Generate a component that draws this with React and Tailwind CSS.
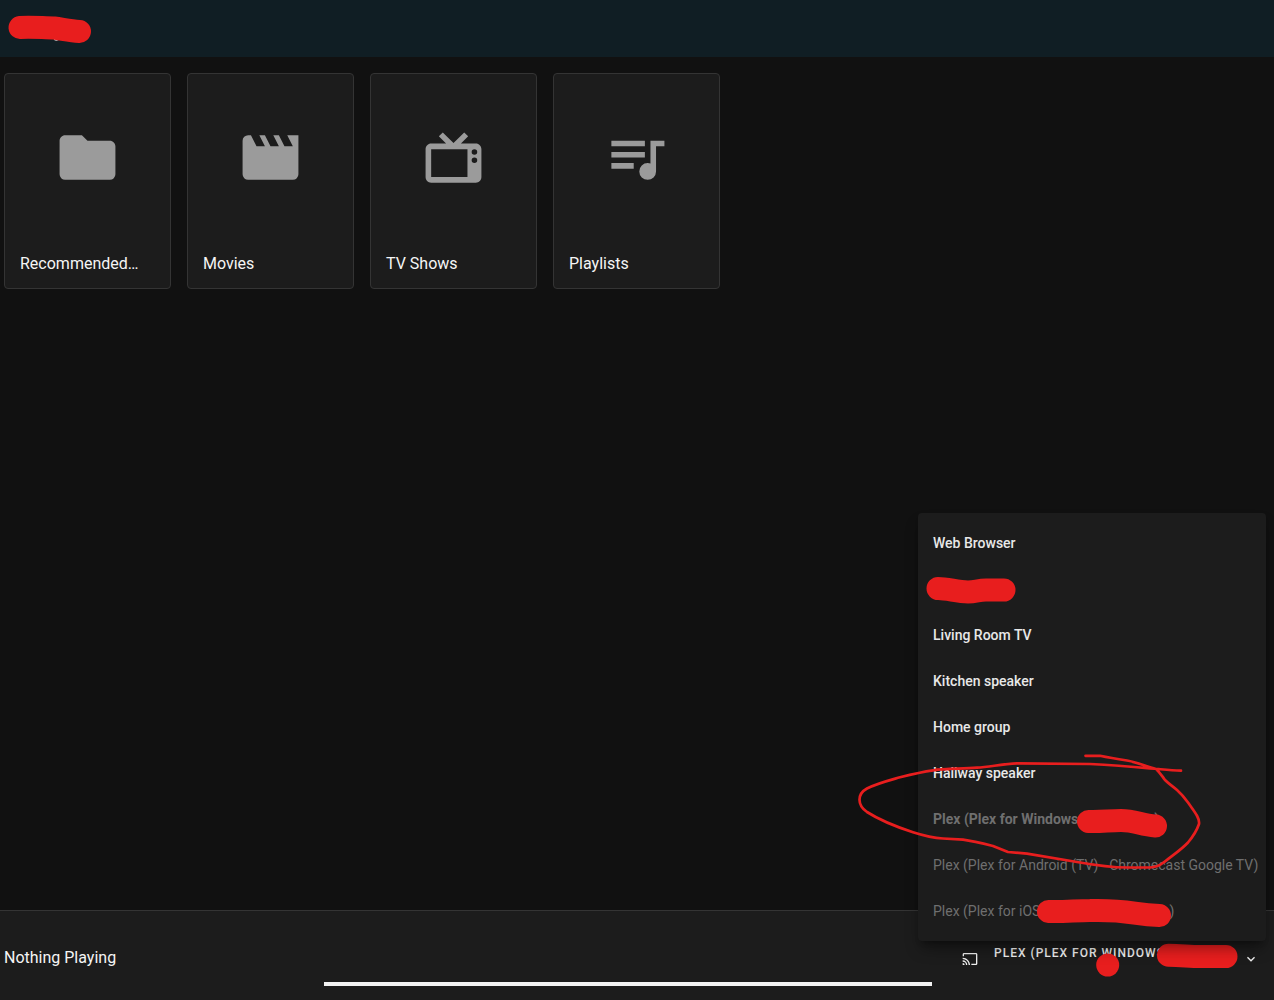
import React from "react";

const folders = [
  {
    title: "Recommended…",
    path: "M10,4H4C2.89,4 2,4.89 2,6V18A2,2 0 0,0 4,20H20A2,2 0 0,0 22,18V8C22,6.89 21.1,6 20,6H12L10,4Z",
  },
  {
    title: "Movies",
    path: "M18,4L20,8H17L15,4H13L15,8H12L10,4H8L10,8H7L5,4H4A2,2 0 0,0 2,6V18A2,2 0 0,0 4,20H20A2,2 0 0,0 22,18V4H18Z",
  },
  {
    title: "TV Shows",
    path: "M8.16,3L6.75,4.41L9.34,7H4C2.89,7 2,7.89 2,9V19C2,20.11 2.89,21 4,21H20C21.11,21 22,20.11 22,19V9C22,7.89 21.11,7 20,7H14.66L17.25,4.41L15.84,3L12,6.84L8.16,3M4,9H17V19H4V9M19.5,9A1,1 0 0,1 20.5,10A1,1 0 0,1 19.5,11A1,1 0 0,1 18.5,10A1,1 0 0,1 19.5,9M19.5,12A1,1 0 0,1 20.5,13A1,1 0 0,1 19.5,14A1,1 0 0,1 18.5,13A1,1 0 0,1 19.5,12Z",
  },
  {
    title: "Playlists",
    path: "M15,6H3V8H15V6M15,10H3V12H15V10M3,16H11V14H3V16M17,6V14.18C16.69,14.07 16.35,14 16,14A3,3 0 0,0 13,17A3,3 0 0,0 16,20A3,3 0 0,0 19,17V8H22V6H17Z",
  },
];

const players = [
  { name: "Web Browser" },
  { name: "" },
  { name: "Living Room TV" },
  { name: "Kitchen speaker" },
  { name: "Home group" },
  { name: "Hallway speaker" },
  { name: "Plex (Plex for Windows", selected: true, disabled: true, gap: "w-[76px]" },
  { name: "Plex (Plex for Android (TV) - Chromecast Google TV)", disabled: true },
  { name: "Plex (Plex for iOS", disabled: true, gap: "w-[129px]" },
];

const getPlayerStyle = (player) => {
  if (player.selected) return "font-bold text-[#6f6f6f]";
  if (player.disabled) return "font-normal text-[#6f6f6f]";
  return "font-medium text-[#e8e8e8]";
};

const Icon = ({ path, className }) => (
  <svg viewBox="0 0 24 24" fill="currentColor" className={className} aria-hidden="true">
    <path d={path} />
  </svg>
);

const Marker = ({ d, width = 23 }) => (
  <path d={d} fill="none" stroke="#e81e1e" strokeWidth={width} strokeLinecap="round" strokeLinejoin="round" />
);

const Header = () => (
  <header className="h-[57px] bg-[#101e24]">
    <svg viewBox="0 0 100 57" className="h-full" aria-hidden="true">
      <path d="M54 39h6q-3 3-6 1Z" fill="#e1e1e1" />
      <Marker d="M20 27.5C31 26.5 44 28 54 28C62 29 70 31 79.5 31.5" />
    </svg>
  </header>
);

const FolderCard = ({ title, path }) => (
  <button
    type="button"
    className="flex w-[167px] flex-col rounded border border-[#343434] bg-[#1c1c1c] text-left"
  >
    <span className="flex h-[166px] w-full items-center justify-center text-[#9b9b9b]">
      <Icon path={path} className="size-[67px]" />
    </span>
    <span className="px-[15px] text-base leading-12 text-[#f5f5f5]">{title}</span>
  </button>
);

const PlayerMenu = () => (
  <div className="absolute right-2 bottom-[59px] w-[348px] rounded bg-[#1c1c1c] py-[7px] shadow-lg shadow-black/40">
    <ul>
      {players.map((player, i) => (
        <li key={i}>
          <button
            type="button"
            disabled={player.disabled}
            aria-label={player.name || "Player"}
            className={`flex h-[46px] w-full items-center px-[15px] text-sm whitespace-nowrap ${getPlayerStyle(player)}`}
          >
            {player.name}
            {player.gap && (
              <>
                <span className={player.gap} />)
              </>
            )}
          </button>
        </li>
      ))}
    </ul>

    {/* Marker strokes */}
    <svg
      viewBox="918 513 348 428"
      className="pointer-events-none absolute inset-0 size-full overflow-visible"
      aria-hidden="true"
    >
      <Marker d="M938 588.5C948 588.5 957 592 968 592C976 592 978 590 986 590H1004" />
      <Marker d="M1088.5 821.5C1101 822 1109 820.5 1121 820.5C1135 820.5 1141 825 1155.5 826" />
      <Marker d="M1048.5 911.5C1064 912 1076 910.5 1090 910.5C1130 909.5 1132 914.5 1159.5 915.5" />
      <Marker
        width={2.7}
        d="M1181 770.7C1169 770.5 1160 769 1150 768.3C1130 766.5 1110 765 1090 764L1017 763.3C1001 764 990 767 977 767.7C962 769 947 768.5 933 770.3C921 772 911 774.5 900 777.3C887 781 877 783.5 867 788.5C857 794 857 805 867 812C881 821 897 827 913 832.3C923 835.5 933 838 943 838.5L963 839.7C973 841 983 843.5 993 846L1008 852L1027 853.7L1077 862C1094 865 1111 867.5 1127 867.5H1150C1160 867 1162 863 1165 861.5C1173 855 1181 850 1188 842.5C1193 836.5 1197 830 1199 824C1200 818 1194 811 1188 802.5C1184 797 1181 793.5 1177 790C1173 786.5 1169 784 1165 780C1162 776 1160 772.5 1156 769C1146 766.5 1137 762 1127 760.5C1117 759 1108 757.5 1100 755.8H1085.5"
      />
    </svg>
  </div>
);

const PlayerBar = () => (
  <footer className="relative flex h-[90px] border-t border-[#343434] bg-[#1c1c1c]">
    <div className="flex w-[324px] items-center px-1 pt-1 text-base text-[#f5f5f5]">Nothing Playing</div>
    <div className="flex flex-1 items-end pb-[14px]">
      <div role="progressbar" aria-label="Playback progress" className="h-1 w-full bg-[#f2f2f2]" />
    </div>
    <div className="relative flex w-[342px] items-center pt-1.5 pr-[15px] pl-[30px]">
      <button type="button" className="flex w-full items-center text-left text-[#f0f0f0]">
        <Icon
          className="size-4"
          path="M1,10V12A9,9 0 0,1 10,21H12C12,14.92 7.07,10 1,10M1,14V16A5,5 0 0,1 6,21H8A7,7 0 0,0 1,14M1,18V21H4A3,3 0 0,0 1,18M21,3H3C1.89,3 1,3.89 1,5V8H3V5H21V19H14V21H21A2,2 0 0,0 23,19V5C23,3.89 22.1,3 21,3Z"
        />
        <span className="flex-1 pb-3 pl-4 text-xs leading-3 font-medium tracking-[1px] uppercase">
          Plex (Plex for Windows
        </span>
        <Icon className="size-4" path="M7.41,8.58L12,13.17L16.59,8.58L18,10L12,16L6,10L7.41,8.58Z" />
      </button>
      <svg
        viewBox="932 911 342 89"
        className="pointer-events-none absolute inset-0 size-full"
        aria-hidden="true"
      >
        <circle cx="1107.7" cy="965" r="11.5" fill="#e81e1e" />
        <Marker d="M1168.5 955.3C1182 955.5 1190 956.5 1200 956.5H1226" />
      </svg>
    </div>
    <PlayerMenu />
  </footer>
);

const App = () => {
  return (
    <div className="flex min-h-screen flex-col bg-[#111111] font-['Roboto',sans-serif]">
      <Header />
      <main className="flex flex-1 flex-wrap content-start gap-4 px-1 py-4">
        {folders.map((folder) => (
          <FolderCard key={folder.title} {...folder} />
        ))}
      </main>
      <PlayerBar />
    </div>
  );
};

export default App;
